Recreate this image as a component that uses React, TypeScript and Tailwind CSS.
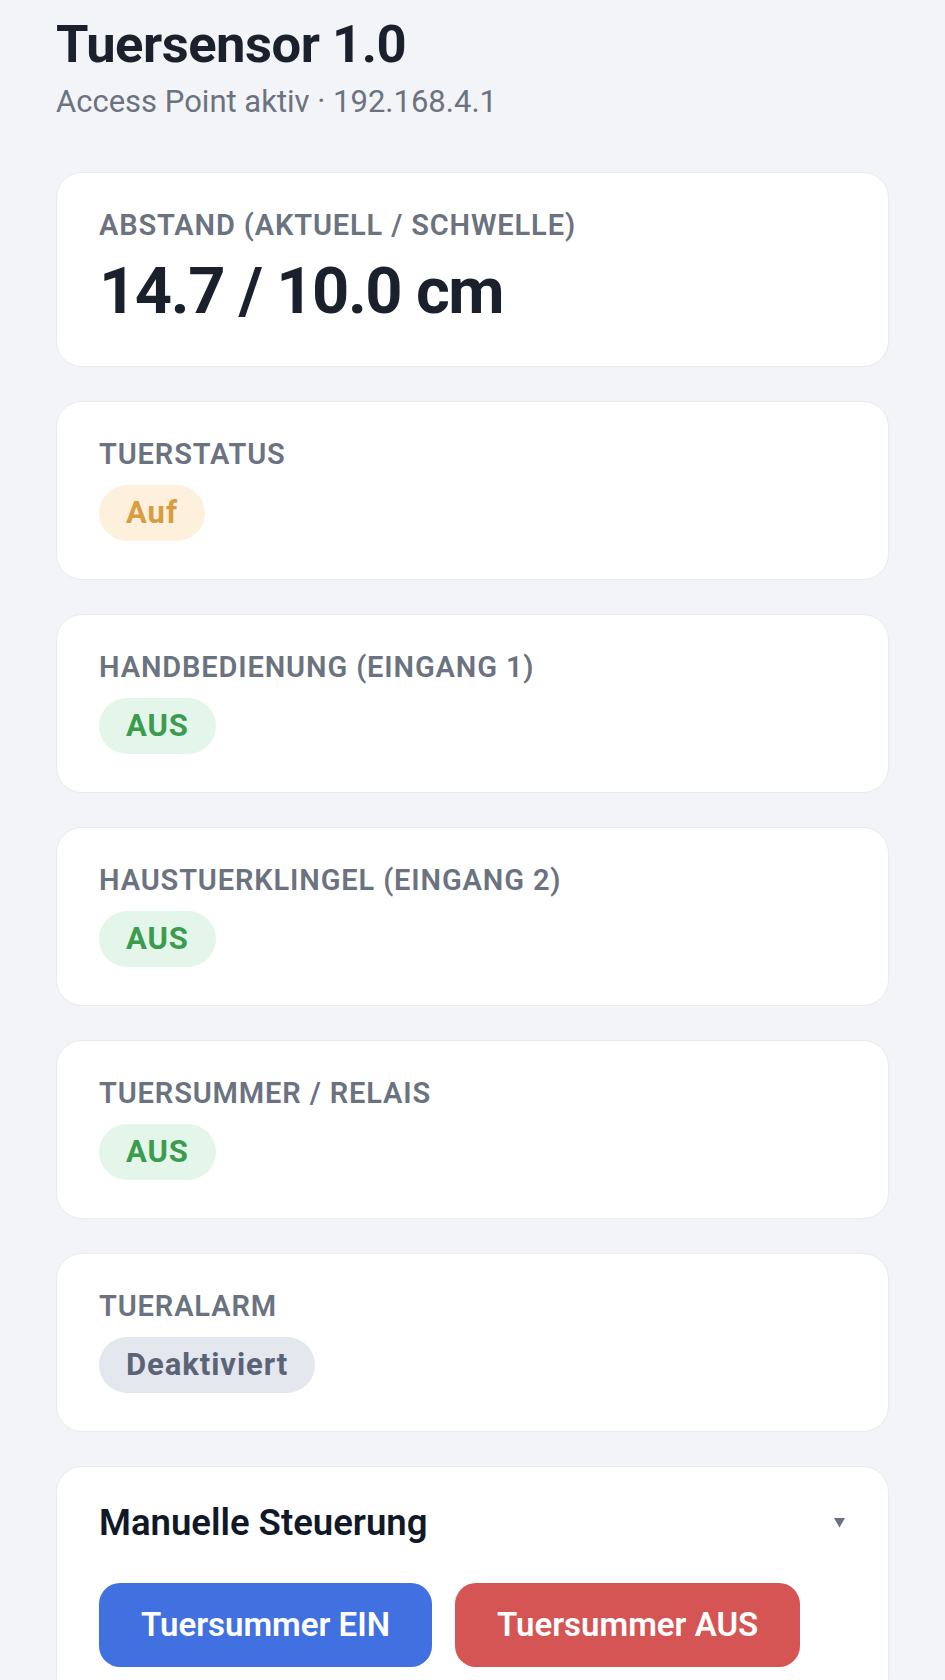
import React from "react";

type Tone = "amber" | "green" | "gray";

const badgeTone: Record<Tone, string> = {
  amber: "bg-[#fdf1de] text-[#d99c3f]",
  green: "bg-[#e4f6e9] text-[#3b9c50]",
  gray: "bg-[#e4e7ee] text-[#5b6476]",
};

function Card({ children, className = "" }: { children: React.ReactNode; className?: string }) {
  return (
    <div className={`rounded-[26px] border border-[#e8eaee] bg-white px-[42px] pt-[35px] ${className}`}>
      {children}
    </div>
  );
}

function Label({ children }: { children: React.ReactNode }) {
  return (
    <div className="text-[29px] leading-[34px] font-semibold uppercase tracking-[0.03em] text-[#6b7280]">
      {children}
    </div>
  );
}

function StatusCard({ label, value, tone }: { label: string; value: string; tone: Tone }) {
  return (
    <Card className="pb-[38px]">
      <Label>{label}</Label>
      <div className="mt-[14px] flex">
        <span
          className={`inline-block rounded-full px-[27px] py-[11px] text-[31px] leading-[34px] font-bold tracking-[0.03em] ${badgeTone[tone]}`}
        >
          {value}
        </span>
      </div>
    </Card>
  );
}

export default function App() {
  return (
    <div
      className="min-h-[1680px] bg-[#f3f4f7] px-[56px] pt-[13px] text-[#1a202c]"
      style={{ fontFamily: "Roboto, 'Noto Sans', sans-serif" }}
    >
      <h1 className="text-[52.5px] leading-[63px] font-bold tracking-[-0.009em] text-[#1a202c]">
        Tuersensor 1.0
      </h1>
      <p className="mt-[7px] text-[31px] leading-[38px] text-[#6b7280]">
        Access Point aktiv · 192.168.4.1
      </p>

      <div className="mt-[51px] flex flex-col gap-[34px]">
        <Card className="pb-[35px]">
          <Label>Abstand (aktuell / Schwelle)</Label>
          <div className="mt-[10px] text-[65px] leading-[79px] font-bold tracking-[-0.022em] text-[#1a202c]">
            14.7 / 10.0 cm
          </div>
        </Card>

        <StatusCard label="Tuerstatus" value="Auf" tone="amber" />
        <StatusCard label="Handbedienung (Eingang 1)" value="AUS" tone="green" />
        <StatusCard label="Haustuerklingel (Eingang 2)" value="AUS" tone="green" />
        <StatusCard label="Tuersummer / Relais" value="AUS" tone="green" />
        <StatusCard label="Tueralarm" value="Deaktiviert" tone="gray" />

        <Card className="pb-[35px]">
          <div className="flex items-center justify-between">
            <h2 className="text-[36.5px] leading-[42px] font-semibold text-[#111827]">
              Manuelle Steuerung
            </h2>
            <svg width="11" height="10" viewBox="0 0 11 10" className="mr-[1px]">
              <path d="M0 0 H11 L5.5 9.5 Z" fill="#6b7280" />
            </svg>
          </div>
          <div className="mt-[39px] flex gap-[23px]">
            <button className="h-[84px] rounded-[21px] bg-[#4170e0] px-[42px] text-[33px] font-semibold text-white">
              Tuersummer EIN
            </button>
            <button className="h-[84px] rounded-[21px] bg-[#d55454] px-[42px] text-[33px] font-semibold text-white">
              Tuersummer AUS
            </button>
          </div>
        </Card>
      </div>
    </div>
  );
}
